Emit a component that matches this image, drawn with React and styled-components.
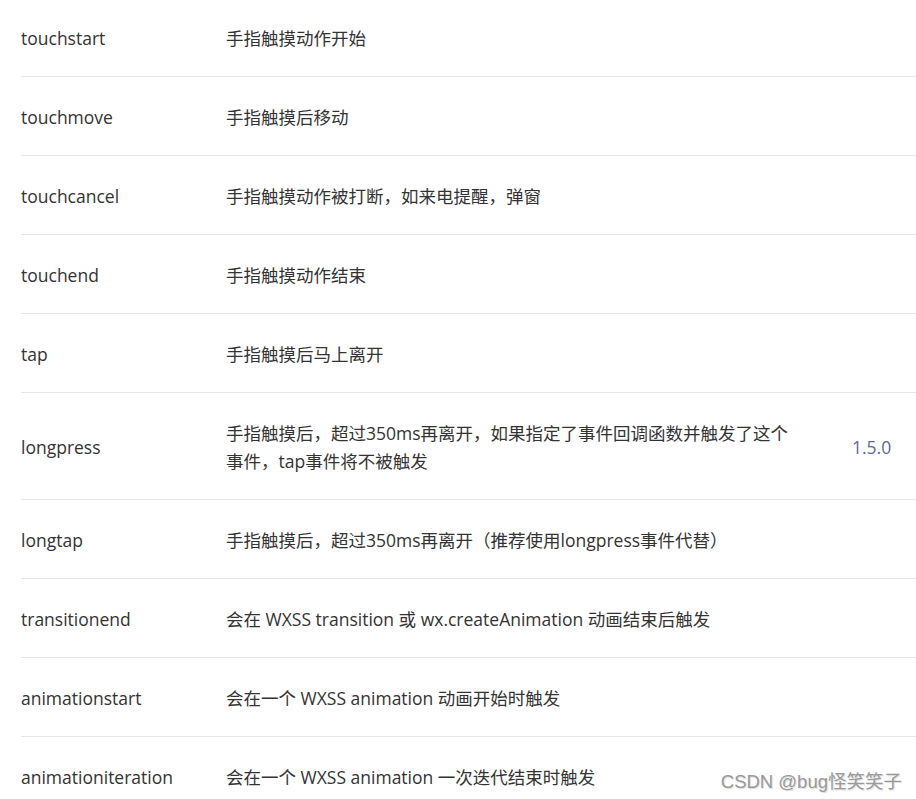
import React from "react";
import styled, { createGlobalStyle } from "styled-components";

const rows = [
  ["touchstart", "手指触摸动作开始", ""],
  ["touchmove", "手指触摸后移动", ""],
  ["touchcancel", "手指触摸动作被打断，如来电提醒，弹窗", ""],
  ["touchend", "手指触摸动作结束", ""],
  ["tap", "手指触摸后马上离开", ""],
  [
    "longpress",
    "手指触摸后，超过350ms再离开，如果指定了事件回调函数并触发了这个事件，tap事件将不被触发",
    "1.5.0",
  ],
  ["longtap", "手指触摸后，超过350ms再离开（推荐使用longpress事件代替）", ""],
  ["transitionend", "会在 WXSS transition 或 wx.createAnimation 动画结束后触发", ""],
  ["animationstart", "会在一个 WXSS animation 动画开始时触发", ""],
  ["animationiteration", "会在一个 WXSS animation 一次迭代结束时触发", ""],
];

export default () => {
  return (
    <Page>
      <GlobalStyle />
      <EventTable>
        <colgroup>
          <col style={{ width: "205px" }} />
          <col style={{ width: "626px" }} />
          <col />
        </colgroup>
        <tbody>
          {rows.map(([name, desc, version]) => (
            <Row key={name}>
              <NameCell>{name}</NameCell>
              <DescCell>{desc}</DescCell>
              <VersionCell>{version}</VersionCell>
            </Row>
          ))}
        </tbody>
      </EventTable>
      <Watermark>CSDN @bug怪笑笑子</Watermark>
    </Page>
  );
};

const GlobalStyle = createGlobalStyle`
  html, body {
    margin: 0;
    padding: 0;
    background: #fff;
    overflow: hidden;
  }
`;

const Page = styled.div`
  position: relative;
  width: 916px;
  height: 799px;
  overflow: hidden;
  padding-left: 21px;
  box-sizing: border-box;
  font-family: "Open Sans", "Noto Sans CJK SC", sans-serif;
  font-size: 17.5px;
  color: #333;
`;

const EventTable = styled.table`
  width: 895px;
  margin-top: -2px;
  border-collapse: collapse;
  table-layout: fixed;
`;

const Row = styled.tr`
  border-bottom: 1px solid #e6e6e6;
`;

const Cell = styled.td`
  padding: 26px 0 24px;
  line-height: 28px;
  vertical-align: middle;
  text-align: left;
`;

const NameCell = styled(Cell)``;

const DescCell = styled(Cell)`
  padding-right: 56px;
`;

const VersionCell = styled(Cell)`
  color: #5b6894;
`;

const Watermark = styled.div`
  position: absolute;
  right: 14px;
  bottom: 6px;
  font-family: "Liberation Sans", "Noto Sans CJK SC", sans-serif;
  font-size: 18.5px;
  color: #9a9a9a;
  text-shadow: 1px 1px 1px rgba(0, 0, 0, 0.15);
`;
